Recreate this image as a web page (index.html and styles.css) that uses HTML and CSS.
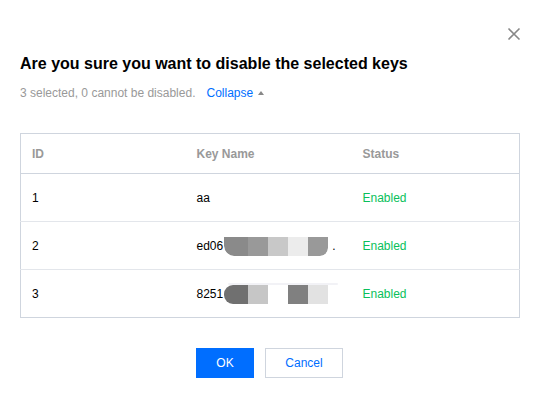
FILE: index.html
```html
<!DOCTYPE html>
<html>
<head>
<meta charset="utf-8">
<link rel="stylesheet" href="styles.css">
</head>
<body>
<div class="dialog">
  <button class="close" aria-label="Close">
    <svg width="14" height="14" viewBox="0 0 14 14"><path d="M1.5 1.5L12.5 12.5M12.5 1.5L1.5 12.5" stroke="#888" stroke-width="1.6" fill="none"/></svg>
  </button>
  <h1 class="title">Are you sure you want to disable the selected keys</h1>
  <div class="summary">
    <span class="muted">3 selected, 0 cannot be disabled.</span>
    <a class="toggle">Collapse</a>
    <span class="caret"></span>
  </div>
  <table class="keys">
    <thead>
      <tr><th class="c1">ID</th><th class="c2">Key Name</th><th>Status</th></tr>
    </thead>
    <tbody>
      <tr class="r1"><td>1</td><td>aa</td><td class="ok">Enabled</td></tr>
      <tr><td>2</td><td><span class="key">ed06<span class="mask m-a"><i class="g1"></i><i class="g2"></i><i class="g3"></i><i class="g4"></i><i class="g2"></i></span>.</span></td><td class="ok">Enabled</td></tr>
      <tr><td>3</td><td><span class="key">8251<span class="mask m-b"><i class="h1"></i><i class="h2"></i><i class="h3"></i><i class="h4"></i><i class="h5"></i></span></span></td><td class="ok">Enabled</td></tr>
    </tbody>
  </table>
  <div class="actions">
    <button class="btn primary">OK</button>
    <button class="btn secondary">Cancel</button>
  </div>
</div>
</body>
</html>
```
FILE: styles.css
```css
* { box-sizing: border-box; }
html, body { margin: 0; padding: 0; background: #fff; }
body { font-family: "Liberation Sans", Arial, Helvetica, sans-serif; color: #000; }
.dialog { position: relative; width: 542px; height: 400px; padding: 52px 22px 0 20px; }
.close { position: absolute; top: 27px; left: 507px; width: 14px; height: 14px; padding: 0; border: 0; background: none; display: block; }
.close svg { display: block; }
.title { margin: 0; font-size: 16px; line-height: 24px; font-weight: bold; color: #000; }
.summary { margin-top: 7px; display: flex; align-items: center; font-size: 12px; line-height: 20px; height: 20px; }
.muted { color: #999; }
.toggle { color: #006eff; margin-left: 11px; }
.caret { margin-left: 5px; width: 0; height: 0; border-left: 3.5px solid transparent; border-right: 3.5px solid transparent; border-bottom: 4px solid #888; margin-top: -1px; }
.keys { margin-top: 30px; width: 500px; border-collapse: collapse; border: 1px solid #cfd5de; font-size: 12px; }
.keys th, .keys td { text-align: left; padding: 0 0 0 11px; }
.keys th { height: 40px; color: #999; font-weight: bold; border-bottom: 1px solid #cfd5de; }
.keys th.c1 { width: 165px; }
.keys th.c2 { width: 166px; }
.keys td { height: 48px; color: #000; border-top: 1px solid #e3e6eb; padding-top: 1px; }
.keys tr.r1 td { height: 48px; border-top: 0; }
.keys td.ok { color: #0abf5b; }
.key { display: inline-flex; align-items: center; }
.mask { display: inline-flex; height: 19px; margin-left: 1px; margin-right: 4px; overflow: hidden; }
.mask i { display: block; width: 20px; height: 19px; }
.m-a { border-radius: 0 0 8px 10px; }
.m-a .g1 { width: 24px; background: #8a8a8a; }
.m-a .g2 { background: #999; }
.m-a .g3 { background: #c8c8c8; }
.m-a .g4 { background: #ececec; }
.m-a i:last-child { border-radius: 0 0 8px 0; }
.m-a i:first-child { border-radius: 0 0 0 10px; }
.m-b { border-radius: 8px 0 0 8px; overflow: visible; position: relative; }
.m-b::before { content: ""; position: absolute; left: 4px; top: -2px; width: 110px; height: 2px; background: #f2f2f6; border-radius: 2px; }
.m-b .h1 { width: 24px; background: #707070; border-radius: 9px 0 0 9px; }
.m-b .h2 { background: #c6c6c6; }
.m-b .h3 { background: #fff; }
.m-b .h4 { background: #808080; }
.m-b .h5 { background: #e2e2e2; }
.actions { margin-top: 30px; display: flex; justify-content: center; gap: 11px; padding-right: 1px; }
.btn { height: 30px; font-family: inherit; font-size: 12px; padding: 0; border-radius: 0; cursor: pointer; }
.primary { width: 58px; background: #006eff; color: #fff; border: 0; }
.secondary { width: 78px; background: #fff; color: #006eff; border: 1px solid #cfd5de; }
```
